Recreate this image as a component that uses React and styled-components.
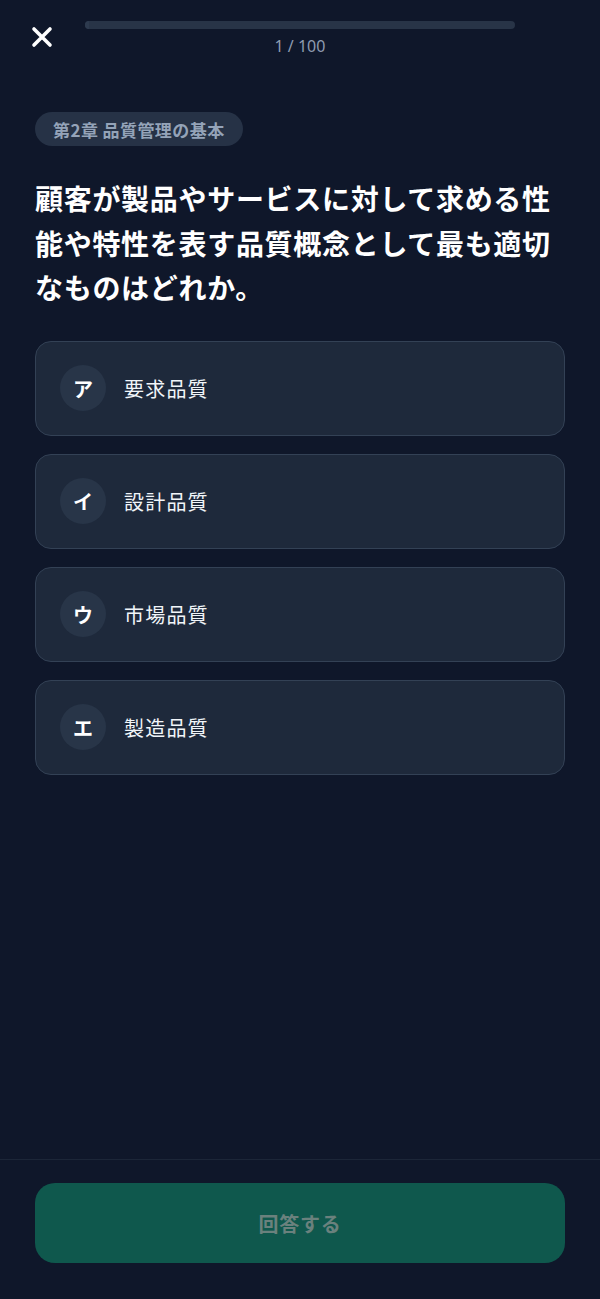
import React from "react";
import styled, { createGlobalStyle } from "styled-components";

const GlobalStyle = createGlobalStyle`
  * { box-sizing: border-box; }
  html, body { margin: 0; padding: 0; background: #0f172a; }
  body {
    font-family: "Noto Sans CJK JP", "Noto Sans", sans-serif;
    color: #f8fafc;
  }
`;

const Page = styled.div`
  width: 600px;
  height: 1299px;
  background: #0f172a;
  display: flex;
  flex-direction: column;
`;

const Header = styled.header`
  display: flex;
  align-items: flex-start;
  gap: 21px;
  padding: 16px 20px 0;
`;

const CloseButton = styled.button`
  width: 44px;
  height: 44px;
  border: none;
  background: transparent;
  padding: 0;
  display: flex;
  align-items: center;
  justify-content: center;
  color: #ffffff;
  margin-top: -1px;
`;

const Spacer = styled.div`
  width: 44px;
  height: 44px;
`;

const ProgressColumn = styled.div`
  flex: 1;
  display: flex;
  flex-direction: column;
  align-items: center;
  padding-top: 5px;
  gap: 5px;
`;

const Track = styled.div`
  width: 100%;
  height: 8px;
  border-radius: 4px;
  background: #283447;
  overflow: hidden;
`;

const Fill = styled.div`
  height: 100%;
  background: #2d3a4e;
`;

const Counter = styled.div`
  font-family: "Noto Sans", sans-serif;
  font-size: 16px;
  line-height: 24px;
  color: #8e9bb0;
`;

const Main = styled.main`
  flex: 1;
  padding: 52px 35px 0;
  display: flex;
  flex-direction: column;
  align-items: flex-start;
`;

const Badge = styled.div`
  height: 34px;
  padding: 0 18px;
  border-radius: 17px;
  background: #263246;
  color: #94a3b8;
  font-size: 17px;
  font-weight: 700;
  letter-spacing: 0.025em;
  display: flex;
  align-items: center;
`;

const Question = styled.h1`
  margin: 30px 0 31px;
  font-size: 28px;
  line-height: 44.6px;
  font-weight: 700;
  letter-spacing: 0.025em;
  color: #ffffff;
`;

const Options = styled.div`
  width: 100%;
  display: flex;
  flex-direction: column;
  gap: 18px;
`;

const Option = styled.button`
  width: 100%;
  height: 95px;
  display: flex;
  align-items: center;
  gap: 18px;
  padding: 0 24px;
  border-radius: 16px;
  border: 1px solid #334155;
  background: #1e293b;
  color: #f1f5f9;
  font-family: inherit;
  text-align: left;
`;

const Letter = styled.span`
  width: 46px;
  height: 46px;
  flex: none;
  border-radius: 50%;
  background: #283548;
  display: flex;
  align-items: center;
  justify-content: center;
  font-size: 20px;
  font-weight: 700;
  color: #ffffff;
`;

const Label = styled.span`
  font-size: 20px;
  letter-spacing: 0.06em;
  color: #f1f5f9;
`;

const Footer = styled.footer`
  border-top: 1px solid #1c2638;
  padding: 23px 35px 36px;
`;

const SubmitButton = styled.button`
  width: 100%;
  height: 80px;
  border: none;
  border-radius: 20px;
  background: #0f584d;
  color: #6a817d;
  font-family: inherit;
  font-size: 20px;
  font-weight: 700;
  letter-spacing: 0.04em;
`;

const options = [
  { key: "ア", label: "要求品質" },
  { key: "イ", label: "設計品質" },
  { key: "ウ", label: "市場品質" },
  { key: "エ", label: "製造品質" },
];

export default function App() {
  return (
    <>
      <GlobalStyle />
      <Page>
        <Header>
          <CloseButton aria-label="閉じる">
            <svg width="22" height="22" viewBox="0 0 22 22" fill="none">
              <path
                d="M3 3 L19 19 M19 3 L3 19"
                stroke="currentColor"
                strokeWidth="3.6"
                strokeLinecap="round"
              />
            </svg>
          </CloseButton>
          <ProgressColumn>
            <Track>
              <Fill style={{ width: `${(1 / 100) * 100}%` }} />
            </Track>
            <Counter>1 / 100</Counter>
          </ProgressColumn>
          <Spacer />
        </Header>
        <Main>
          <Badge>第2章 品質管理の基本</Badge>
          <Question>
            顧客が製品やサービスに対して求める性能や特性を表す品質概念として最も適切なものはどれか。
          </Question>
          <Options>
            {options.map((o) => (
              <Option key={o.key}>
                <Letter>{o.key}</Letter>
                <Label>{o.label}</Label>
              </Option>
            ))}
          </Options>
        </Main>
        <Footer>
          <SubmitButton disabled>回答する</SubmitButton>
        </Footer>
      </Page>
    </>
  );
}
